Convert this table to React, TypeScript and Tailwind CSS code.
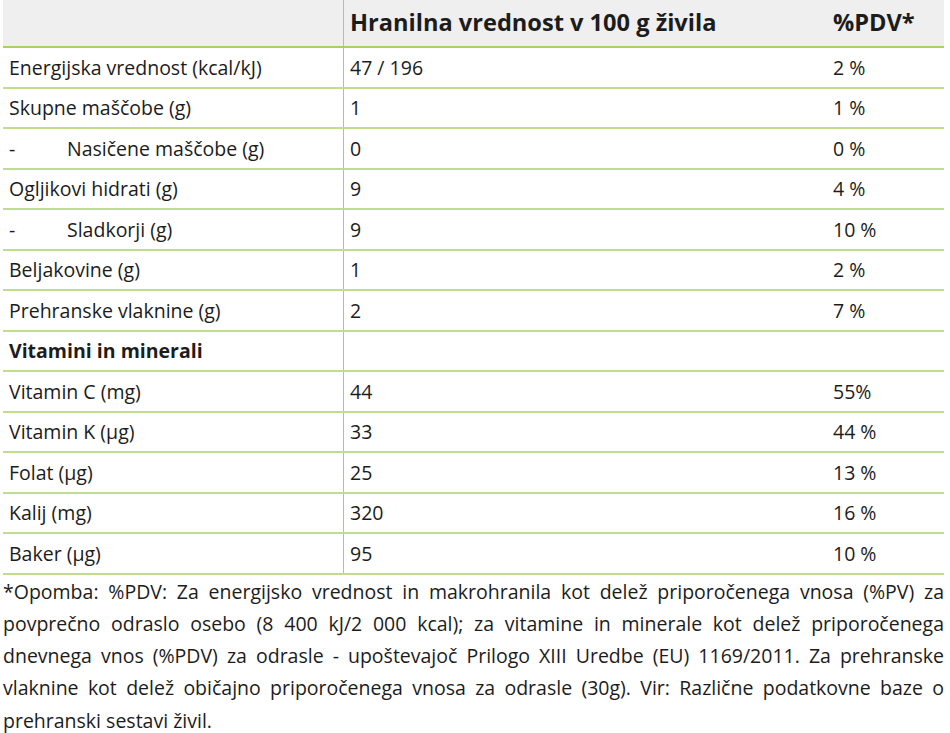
import React from "react";

type Row = { label: string; value: string; pdv: string; sub?: boolean; bold?: boolean };

const rows: Row[] = [
  { label: "Energijska vrednost (kcal/kJ)", value: "47 / 196", pdv: "2 %" },
  { label: "Skupne maščobe (g)", value: "1", pdv: "1 %" },
  { label: "Nasičene maščobe (g)", value: "0", pdv: "0 %", sub: true },
  { label: "Ogljikovi hidrati (g)", value: "9", pdv: "4 %" },
  { label: "Sladkorji (g)", value: "9", pdv: "10 %", sub: true },
  { label: "Beljakovine (g)", value: "1", pdv: "2 %" },
  { label: "Prehranske vlaknine (g)", value: "2", pdv: "7 %" },
  { label: "Vitamini in minerali", value: "", pdv: "", bold: true },
  { label: "Vitamin C (mg)", value: "44", pdv: "55%" },
  { label: "Vitamin K (µg)", value: "33", pdv: "44 %" },
  { label: "Folat (µg)", value: "25", pdv: "13 %" },
  { label: "Kalij (mg)", value: "320", pdv: "16 %" },
  { label: "Baker (µg)", value: "95", pdv: "10 %" },
];

// footnote lines, broken as on the source page
const note = [
  "*Opomba: %PDV: Za energijsko vrednost in makrohranila kot delež priporočenega vnosa (%PV) za",
  "povprečno odraslo osebo (8 400 kJ/2 000 kcal); za vitamine in minerale kot delež priporočenega",
  "dnevnega vnos (%PDV) za odrasle - upoštevajoč Prilogo XIII Uredbe (EU) 1169/2011. Za prehranske",
  "vlaknine kot delež običajno priporočenega vnosa za odrasle (30g). Vir: Različne podatkovne baze o",
];

export default function App() {
  return (
    <div
      className="w-[950px] h-[733px] bg-white text-[#1c1c1c] overflow-hidden"
      style={{ fontFamily: '"Open Sans", "Noto Sans", sans-serif' }}
    >
      <div className="ml-[3px] w-[941px]">
        <div className="grid grid-cols-[341px_482px_1fr] h-[48px] bg-[#efefef] border-b-2 border-[#a9d162]">
          <div className="border-r border-[#a9d162]" />
          <div className="flex items-center pl-[6px] text-[23.6px] font-bold">Hranilna vrednost v 100 g živila</div>
          <div className="flex items-center pl-[7px] text-[23.6px] font-bold">%PDV*</div>
        </div>
        {rows.map((r) => (
          <div
            key={r.label}
            className="grid grid-cols-[341px_482px_1fr] h-[40.5px] border-b-2 border-[#bfdd8c] text-[19.5px]"
          >
            <div className={`flex items-center pl-[6px] border-r border-[#a9d162] ${r.bold ? "font-bold" : ""}`}>
              {r.sub ? (
                <>
                  <span className="w-[58px]">-</span>
                  <span>{r.label}</span>
                </>
              ) : (
                r.label
              )}
            </div>
            <div className="flex items-center pl-[6px]">{r.value}</div>
            <div className="flex items-center pl-[7px]">{r.pdv}</div>
          </div>
        ))}
        <div className="mt-[1px] text-[19.5px] leading-[32.3px]">
          {note.map((line) => (
            <div key={line} className="text-justify [text-align-last:justify] whitespace-nowrap">
              {line}
            </div>
          ))}
          <div>prehranski sestavi živil.</div>
        </div>
      </div>
    </div>
  );
}
